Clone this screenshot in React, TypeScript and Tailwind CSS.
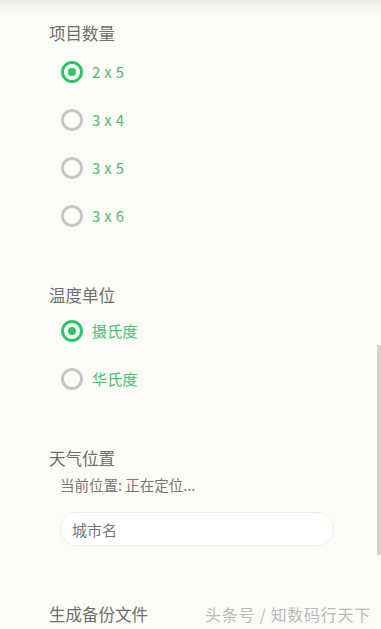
import { useState } from "react";

const COUNTS = ["2 x 5", "3 x 4", "3 x 5", "3 x 6"];
const UNITS = ["摄氏度", "华氏度"];

function Radio({ label, checked, onClick }: { label: string; checked: boolean; onClick: () => void }) {
  return (
    <button onClick={onClick} className="flex h-12 items-center gap-[9px] pl-[61px] text-left">
      <span
        className={
          checked
            ? "flex h-[22px] w-[22px] items-center justify-center rounded-full border-[3px] border-[#2fc46c]"
            : "flex h-[22px] w-[22px] items-center justify-center rounded-full border-[3px] border-[#c6c6c6]"
        }
      >
        {checked && <span className="h-[8px] w-[8px] rounded-full bg-[#2fc46c]" />}
      </span>
      <span className="text-[15px] leading-5 tracking-[0.3px] text-[#49bd72]">{label}</span>
    </button>
  );
}

export default function App() {
  const [count, setCount] = useState("2 x 5");
  const [unit, setUnit] = useState("摄氏度");

  return (
    <div
      className="relative h-[629px] overflow-hidden bg-[#fcfcf6]"
      style={{ fontFamily: '"Noto Sans CJK SC", "Noto Sans", sans-serif' }}
    >
      {/* header shadow */}
      <div className="absolute inset-x-0 top-0 h-[14px] bg-gradient-to-b from-[#ececea] to-[#fcfcf6]" />

      <div className="flex flex-col pt-[21px]">
        <h2 className="h-6 pl-[49px] text-[16.5px] leading-6 text-[#6e6e6e]">项目数量</h2>
        <div className="mt-[3px] flex flex-col">
          {COUNTS.map((c) => (
            <Radio key={c} label={c} checked={count === c} onClick={() => setCount(c)} />
          ))}
        </div>

        <h2 className="mt-[43px] h-6 pl-[49px] text-[16.5px] leading-6 text-[#6e6e6e]">温度单位</h2>
        <div className="flex flex-col">
          {UNITS.map((u) => (
            <Radio key={u} label={u} checked={unit === u} onClick={() => setUnit(u)} />
          ))}
        </div>

        <h2 className="mt-[43px] h-6 pl-[49px] text-[16.5px] leading-6 text-[#6e6e6e]">天气位置</h2>
        <p className="mt-[5px] h-5 pl-[60px] text-[14.5px] leading-5 text-[#777]">当前位置: 正在定位...</p>
        <div className="mt-[17px] pl-[60px] pr-[47px]">
          <input
            placeholder="城市名"
            className="h-[34px] w-full rounded-full border border-[#efefe9] bg-white px-[11px] text-[15px] text-[#555] outline-none placeholder:text-[#777]"
          />
        </div>

        <h2 className="mt-[56px] h-6 pl-[49px] text-[16.5px] leading-6 text-[#6e6e6e]">生成备份文件</h2>
      </div>

      {/* scrollbar */}
      <div className="absolute right-0 top-[345px] h-[210px] w-[4px] bg-[#d4d4d2]" />

      {/* watermark */}
      <div className="absolute left-[205px] top-[602px] text-[16px] leading-6 tracking-[0.7px] text-[#b9b9b9] [text-shadow:1px_1px_0_#fff]">
        头条号 / 知数码行天下
      </div>
    </div>
  );
}
